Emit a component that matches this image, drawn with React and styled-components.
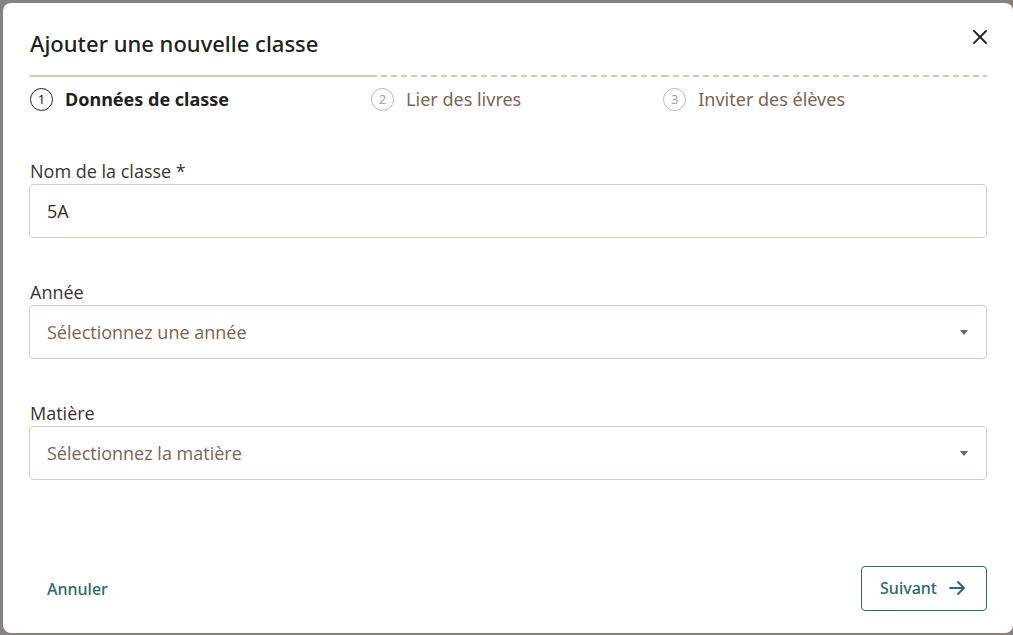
import React from "react";
import styled, { createGlobalStyle } from "styled-components";

const Global = createGlobalStyle`
  html, body { margin: 0; padding: 0; }
  body {
    background: #85827f;
    font-family: "Open Sans", "Noto Sans", sans-serif;
    overflow: hidden;
  }
  #root { padding: 3px 0 0 3px; }
`;

const Dialog = styled.div`
  box-sizing: border-box;
  width: 1010px;
  height: 630px;
  background: #fff;
  border-radius: 8px;
  padding: 0 26px 0 26px;
  display: flex;
  flex-direction: column;
  position: relative;
`;

const Header = styled.div`
  display: flex;
  align-items: center;
  height: 72px;
  padding-left: 1px;
`;

const Title = styled.h2`
  margin: 0;
  padding-top: 8px;
  font-family: "Noto Sans", sans-serif;
  font-weight: 500;
  font-size: 22px;
  color: #231f1c;
`;

const CloseButton = styled.button`
  position: absolute;
  top: 26px;
  right: 25px;
  width: 16px;
  height: 16px;
  padding: 0;
  border: none;
  background: none;
  cursor: pointer;
  display: flex;
  align-items: center;
  justify-content: center;
`;

const Stepper = styled.div`
  display: flex;
  padding-left: 1px;
`;

const Step = styled.div`
  flex: 1 1 auto;
  display: flex;
  flex-direction: column;
`;

const StepBar = styled.div`
  height: 2px;
  background: ${(p) =>
    p.$active
      ? "#d9c8b8"
      : "repeating-linear-gradient(90deg, #d9c8b8 0 6px, transparent 6px 10px)"};
`;

const StepBody = styled.div`
  display: flex;
  align-items: center;
  gap: 12px;
  padding-top: 10px;
`;

const StepNum = styled.span`
  box-sizing: border-box;
  width: 23px;
  height: 23px;
  border-radius: 50%;
  border: 1px solid ${(p) => (p.$active ? "#231f1c" : "#bdb8b4")};
  color: ${(p) => (p.$active ? "#231f1c" : "#a9a39d")};
  font-family: "Noto Sans", sans-serif;
  font-size: 13px;
  display: flex;
  align-items: center;
  justify-content: center;
  flex: none;
`;

const StepLabel = styled.span`
  font-family: "Noto Sans", sans-serif;
  font-size: 18px;
  font-weight: ${(p) => (p.$active ? 700 : 400)};
  color: ${(p) => (p.$active ? "#231f1c" : "#7a6452")};
  white-space: nowrap;
`;

const Form = styled.div`
  display: flex;
  flex-direction: column;
  gap: 42px;
  margin-top: 48px;
`;

const Field = styled.div`
  display: flex;
  flex-direction: column;
  gap: 1px;
`;

const Label = styled.label`
  font-size: 18px;
  color: #3a3430;
  line-height: 24px;
  padding-left: 1px;
`;

const Box = styled.div`
  box-sizing: border-box;
  height: 54px;
  border: 1px solid #dccbbb;
  border-radius: 4px;
  display: flex;
  align-items: center;
  justify-content: space-between;
  padding: 0 17px 0 17px;
`;

const Value = styled.span`
  font-size: 18px;
  color: ${(p) => (p.$placeholder ? "#7b6452" : "#2e2926")};
`;

const Caret = styled.span`
  width: 0;
  height: 0;
  border-left: 4.5px solid transparent;
  border-right: 4.5px solid transparent;
  border-top: 5px solid #6b6764;
  margin-right: 1px;
`;

const Footer = styled.div`
  margin-top: auto;
  margin-bottom: 22px;
  display: flex;
  align-items: center;
  justify-content: space-between;
`;

const TextButton = styled.button`
  border: none;
  background: none;
  font-family: "Noto Sans", sans-serif;
  font-weight: 500;
  font-size: 16px;
  color: #2b6b66;
  padding: 0 0 0 18px;
  cursor: pointer;
`;

const OutlineButton = styled.button`
  box-sizing: border-box;
  height: 45px;
  width: 126px;
  border: 1px solid #2b6b66;
  border-radius: 4px;
  background: #fff;
  color: #2b6b66;
  font-family: "Noto Sans", sans-serif;
  font-weight: 500;
  font-size: 16px;
  display: flex;
  align-items: center;
  justify-content: center;
  gap: 12px;
  padding: 0 3px 1px 0;
  cursor: pointer;
`;

const steps = ["Données de classe", "Lier des livres", "Inviter des élèves"];

export default function App() {
  return (
    <>
      <Global />
      <Dialog>
        <Header>
          <Title>Ajouter une nouvelle classe</Title>
        </Header>
        <CloseButton aria-label="Fermer">
          <svg width="14" height="14" viewBox="0 0 14 14">
            <path d="M1 1L13 13M13 1L1 13" stroke="#231f1c" strokeWidth="1.9" strokeLinecap="square" />
          </svg>
        </CloseButton>
        <Stepper>
          {steps.map((s, i) => (
            <Step key={s}>
              <StepBar $active={i === 0} />
              <StepBody>
                <StepNum $active={i === 0}>{i + 1}</StepNum>
                <StepLabel $active={i === 0}>{s}</StepLabel>
              </StepBody>
            </Step>
          ))}
        </Stepper>
        <Form>
          <Field>
            <Label>Nom de la classe *</Label>
            <Box>
              <Value>5A</Value>
            </Box>
          </Field>
          <Field>
            <Label>Année</Label>
            <Box>
              <Value $placeholder>Sélectionnez une année</Value>
              <Caret />
            </Box>
          </Field>
          <Field>
            <Label>Matière</Label>
            <Box>
              <Value $placeholder>Sélectionnez la matière</Value>
              <Caret />
            </Box>
          </Field>
        </Form>
        <Footer>
          <TextButton>Annuler</TextButton>
          <OutlineButton>
            Suivant
            <svg width="16" height="14" viewBox="0 0 16 14" fill="none" stroke="#2b6b66" strokeWidth="1.9" strokeLinecap="round" strokeLinejoin="round">
              <path d="M1 7h14M9 1l6 6-6 6" />
            </svg>
          </OutlineButton>
        </Footer>
      </Dialog>
    </>
  );
}
